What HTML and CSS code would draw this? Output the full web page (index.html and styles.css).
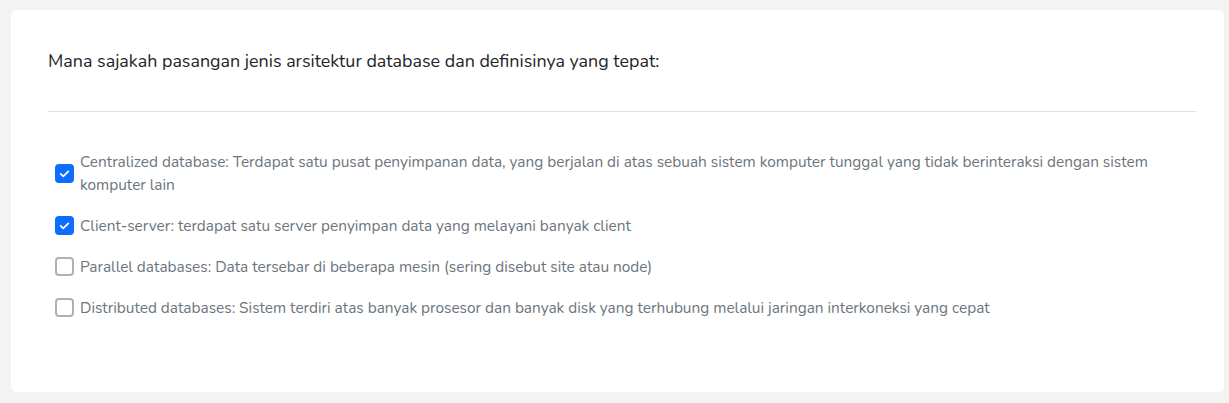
FILE: index.html
```html
<!DOCTYPE html>
<html>
	<head>
		<meta charset="UTF-8">
		<title>Soal</title>
		<link rel="stylesheet" href="styles.css">
	</head>
	<body>
		<div class="card">
			<p class="question">Mana sajakah pasangan jenis arsitektur database dan definisinya yang tepat:</p>
			<hr class="divider">
			<ul class="options">
				<li class="option">
					<span class="box checked"><svg viewBox="0 0 20 20" width="19" height="19"><path d="M6 10.3l2.7 2.7 5.3-5.3" fill="none" stroke="#fff" stroke-width="1.8" stroke-linecap="round" stroke-linejoin="round"/></svg></span>
					<span class="label">Centralized database: Terdapat satu pusat penyimpanan data, yang berjalan di atas sebuah sistem komputer tunggal yang tidak berinteraksi dengan sistem komputer lain</span>
				</li>
				<li class="option">
					<span class="box checked"><svg viewBox="0 0 20 20" width="19" height="19"><path d="M6 10.3l2.7 2.7 5.3-5.3" fill="none" stroke="#fff" stroke-width="1.8" stroke-linecap="round" stroke-linejoin="round"/></svg></span>
					<span class="label">Client-server: terdapat satu server penyimpan data yang melayani banyak client</span>
				</li>
				<li class="option">
					<span class="box"></span>
					<span class="label">Parallel databases: Data tersebar di beberapa mesin (sering disebut site atau node)</span>
				</li>
				<li class="option">
					<span class="box"></span>
					<span class="label">Distributed databases: Sistem terdiri atas banyak prosesor dan banyak disk yang terhubung melalui jaringan interkoneksi yang cepat</span>
				</li>
			</ul>
		</div>
	</body>
</html>
```

FILE: styles.css
```css
body{
	margin: 0;
	background: #f3f3f3;
	font-family: "Nunito", "Open Sans", "Noto Sans", sans-serif;
	padding: 10px 5px 11px 11px;
}
.card{
	background: #fff;
	border-radius: 6px;
	padding: 36px 28px 44px 37px;
	height: 302px;
}
.question{
	margin: 0;
	font-size: 17.9px;
	line-height: 30px;
	color: #212529;
}
.divider{
	border: 0;
	border-top: 1px solid #dee2e6;
	margin: 35px 0 38px 0;
}
.options{
	list-style: none;
	margin: 0;
	padding: 0 0 0 7px;
}
.option{
	display: flex;
	align-items: center;
	gap: 6px;
	margin-bottom: 18px;
}
.box{
	flex: none;
	box-sizing: border-box;
	width: 19px;
	height: 19px;
	border: 2px solid #b0b0b0;
	border-radius: 4px;
	display: flex;
	align-items: center;
	justify-content: center;
}
.box.checked{
	background: #0d6efd;
	border: 0;
}
.box svg{
	flex: none;
}
.label{
	font-size: 15.4px;
	line-height: 23px;
	color: #6c757d;
}
```
